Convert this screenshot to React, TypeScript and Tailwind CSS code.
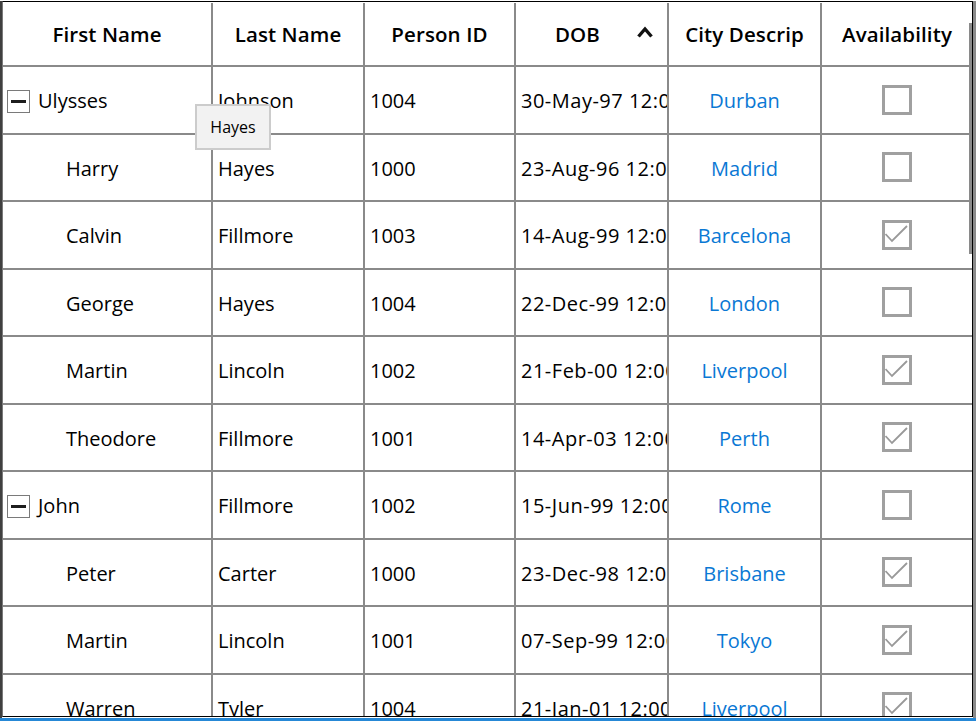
interface Person {
  first: string;
  last: string;
  id: number;
  dob: string;
  city: string;
  available: boolean;
  group?: boolean;
}

const people: Person[] = [
  { first: "Ulysses", last: "Johnson", id: 1004, dob: "30-May-97 12:00:00 AM", city: "Durban", available: false, group: true },
  { first: "Harry", last: "Hayes", id: 1000, dob: "23-Aug-96 12:00:00 AM", city: "Madrid", available: false },
  { first: "Calvin", last: "Fillmore", id: 1003, dob: "14-Aug-99 12:00:00 AM", city: "Barcelona", available: true },
  { first: "George", last: "Hayes", id: 1004, dob: "22-Dec-99 12:00:00 AM", city: "London", available: false },
  { first: "Martin", last: "Lincoln", id: 1002, dob: "21-Feb-00 12:00:00 AM", city: "Liverpool", available: true },
  { first: "Theodore", last: "Fillmore", id: 1001, dob: "14-Apr-03 12:00:00 AM", city: "Perth", available: true },
  { first: "John", last: "Fillmore", id: 1002, dob: "15-Jun-99 12:00:00 AM", city: "Rome", available: false, group: true },
  { first: "Peter", last: "Carter", id: 1000, dob: "23-Dec-98 12:00:00 AM", city: "Brisbane", available: true },
  { first: "Martin", last: "Lincoln", id: 1001, dob: "07-Sep-99 12:00:00 AM", city: "Tokyo", available: true },
  { first: "Warren", last: "Tyler", id: 1004, dob: "21-Jan-01 12:00:00 AM", city: "Liverpool", available: true },
];

const cols = "grid grid-cols-[210px_152px_151px_153px_153px_150px]";
const cell = "border-r-2 border-b-2 border-[#8a8a8a] overflow-hidden whitespace-nowrap flex items-center";
const lastCell = "border-b-2 border-[#8a8a8a] overflow-hidden flex items-center justify-center";

function CheckBox({ checked }: { checked: boolean }) {
  return (
    <div className="h-[30px] w-[30px] border-[3px] border-[#a0a0a0] bg-white">
      {checked && (
        <svg viewBox="0 0 24 24" className="h-full w-full">
          <polyline points="0.5,11 7,18 22,3" fill="none" stroke="#999999" strokeWidth="1.8" />
        </svg>
      )}
    </div>
  );
}

function Collapse() {
  return (
    <div className="flex h-[23px] w-[23px] shrink-0 items-center justify-center border-[1.5px] border-[#7a7a7a] bg-white">
      <div className="h-[3px] w-[15px] bg-[#1e1e1e]" />
    </div>
  );
}

function SortUp() {
  return (
    <svg viewBox="0 0 16 12" className="absolute right-[14px] top-[23px] h-[12px] w-[16px]">
      <polyline points="1.5,10.5 8,3 14.5,10.5" fill="none" stroke="#111111" strokeWidth="3.4" />
    </svg>
  );
}

export default function App() {
  return (
    <div className="relative h-[721px] w-[976px] overflow-hidden bg-white font-['Open_Sans',sans-serif] text-black">
      <div className="flex h-[718px] pt-px">
        <div className="w-[2px] bg-[#404040]" />
        {/* grid frame */}
        <div className="relative h-[716px] w-[971px] overflow-hidden border-y border-r border-l border-black border-l-[#7a7a7a]">
          <div className={`${cols} h-[65px] pt-px text-[20.5px] font-semibold tracking-[0.1px]`}>
            <div className={`${cell} justify-center`}>First Name</div>
            <div className={`${cell} justify-center`}>Last Name</div>
            <div className={`${cell} justify-center`}>Person ID</div>
            <div className={`${cell} relative pr-[28px]`}>
              <span className="flex-1 text-center">DOB</span>
              <SortUp />
            </div>
            <div className={`${cell} justify-center`}>City Descrip</div>
            <div className={lastCell}>Availability</div>
          </div>

          {people.map((p, i) => (
            <div key={i} className={`${cols} h-[67.5px] text-[20px]`}>
              <div className={`${cell} pt-[3px] ${p.group ? "gap-[8px] pl-[4px]" : "pl-[63px]"}`}>
                {p.group && <Collapse />}
                {p.first}
              </div>
              <div className={`${cell} pt-[3px] pl-[5px]`}>{p.last}</div>
              <div className={`${cell} pt-[3px] pl-[5px]`}>{p.id}</div>
              <div className={`${cell} pt-[3px] pl-[5px] tracking-[0.5px]`}>{p.dob}</div>
              <div className={`${cell} pt-[3px] justify-center text-[#0a78d4]`}>{p.city}</div>
              <div className={lastCell}>
                <CheckBox checked={p.available} />
              </div>
            </div>
          ))}

          {/* vertical scroll thumb */}
          <div className="absolute right-0 top-[21px] h-[231px] w-[3px] bg-[#8a8a8a]" />
        </div>
        <div className="h-[717px] w-[3px] bg-[#8a8a8a]" />
      </div>
      <div className="h-[3px] bg-[#2688d6]" />

      {/* hover tooltip */}
      <div className="absolute left-[195px] top-[104px] flex h-[46px] w-[76px] items-center justify-center border-2 border-[#cccccc] bg-[#f2f2f2] text-[16px]">
        Hayes
      </div>
    </div>
  );
}
